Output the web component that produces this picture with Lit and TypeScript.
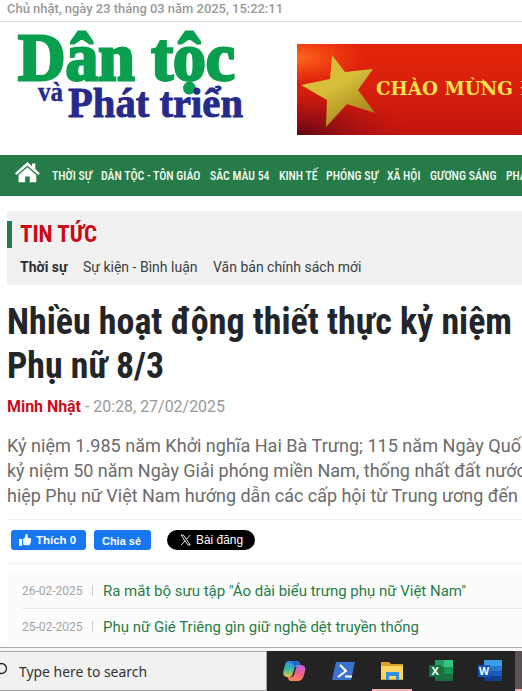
import { LitElement, html, svg, css } from "lit";
import { customElement, property } from "lit/decorators.js";

/** One line of text set to an exact measure. */
@customElement("fit-line")
class FitLine extends LitElement {
  @property() text = "";
  @property({ type: Number }) w = 0;
  @property({ type: Number }) h = 20;
  @property({ type: Number }) base = 15;
  static styles = css`
    :host { display: block; flex: none; }
    svg { display: block; overflow: visible; }
    text { fill: currentColor; stroke: currentColor; stroke-width: var(--stroke, 0); white-space: pre; }
  `;
  render() {
    return html`<svg width=${this.w} height=${this.h}>${svg`<text x="0" y=${this.base} textLength=${this.w} lengthAdjust="spacingAndGlyphs">${this.text}</text>`}</svg>`;
  }
}

@customElement("app-root")
class AppRoot extends LitElement {
  static styles = css`
    :host { display: flex; flex-direction: column; width: 522px; height: 691px; overflow: hidden; background: #fff; font-family: Roboto, "Liberation Sans", sans-serif; color: #222529; }
    * { box-sizing: border-box; }
    svg { display: block; flex: none; }
    .date { height: 22px; padding-left: 7px; border-bottom: 1px solid #ddd; color: #999; font-size: 13px; font-weight: 500; flex: none; }
    .head { display: flex; justify-content: space-between; height: 133px; flex: none; }
    .logo { padding: 10px 0 0 18px; font-family: "Liberation Serif", serif; font-weight: 700; }
    .logo1 { color: #08a04f; font-size: 67px; --stroke: 2.8px; }
    .logo2 { display: flex; gap: 5px; padding-left: 20px; color: #262a8c; }
    .va { font-size: 28px; --stroke: .4px; }
    .pt { font-size: 42px; --stroke: .9px; }
    .banner { margin-top: 22px; width: 225px; height: 91px; overflow: hidden; }
    .nav { display: flex; height: 41px; padding-left: 15px; background: #267c48; color: #f4faf5; font-size: 13px; font-weight: 500; flex: none; }
    .nav, .sec-title, .title { font-family: "Roboto Condensed", Roboto, sans-serif; font-stretch: 75%; }
    .home { margin: 7px 12px 0 0; }
    .nav fit-line { margin-right: 9.2px; }
    .section { margin: 15px 0 0 7px; height: 74px; background: #f1f1f1; padding-top: 10px; flex: none; }
    .sec-title { border-left: 5px solid #267c48; padding-left: 8px; height: 27px; color: #c80a16; font-size: 24px; font-weight: 700; }
    .tabs { display: flex; gap: 15.5px; padding: 9px 0 0 13px; font-size: 15px; color: #3b3e42; }
    .tabs .on { font-weight: 700; color: #2c2f33; }
    .title { padding: 15px 0 0 7px; font-size: 36px; font-weight: 700; flex: none; }
    .meta { display: flex; gap: 4px; padding: 4px 0 0 7px; color: #999; font-size: 16px; flex: none; }
    .author { color: #cb0d1b; font-weight: 700; }
    .lead { margin-top: 15px; padding-left: 7px; font-size: 18px; color: #6b6b6b; flex: none; }
    .share { display: flex; margin: 15px 0 0 8px; height: 45px; border: solid #ececec; border-width: 1px 0; padding: 10px 0 0 3px; flex: none; color: #fff; font-family: "Liberation Sans", sans-serif; font-size: 11px; font-weight: 700; }
    .btn { display: flex; height: 20px; border-radius: 3px; background: #1877f2; }
    .like { width: 75px; padding-left: 7px; gap: 4px; }
    .chia { width: 57px; margin-left: 8px; padding-left: 8px; }
    .post { width: 88px; margin-left: 16px; border-radius: 10px; background: #000; padding-left: 13px; gap: 4px; font-weight: 400; font-size: 12px; }
    .related { margin: 9px 0 0 7px; height: 74px; background: #fcfcfc; padding-left: 15px; flex: none; }
    .row { display: flex; height: 35px; color: #267c48; font-size: 15px; }
    .row + .row { border-top: 1px solid #ebebeb; }
    .day { color: #a3a3a3; font-size: 12px; }
    .bar { width: 1px; height: 11px; margin: 12px 10px 0 9px; background: #ccc; }
    .edge { height: 4px; background: #f8f8f8; border-top: 1px solid #aaa; flex: none; }
    .task { display: flex; height: 40px; background: #242323; flex: none; }
    .search { display: flex; width: 267px; background: #f1f1f1; border: solid #a5a5a5; border-width: 1px 1px 1px 0; color: #333; font-family: "Noto Sans", sans-serif; font-size: 15px; gap: 12px; }
    .apps { flex: 1; }
  `;

  private item(t: string, w: number) {
    return html`<fit-line .text=${t} .w=${w} .h=${41} .base=${25}></fit-line>`;
  }

  render() {
    const nav: [string, number][] = [["THỜI SỰ", 40], ["DÂN TỘC - TÔN GIÁO", 99.5], ["SẮC MÀU 54", 59.5], ["KINH TẾ", 38.5], ["PHÓNG SỰ", 52], ["XÃ HỘI", 33.5], ["GƯƠNG SÁNG", 66.5], ["PHÁP LUẬT", 54]];
    return html`
      <div class="date"><fit-line .text=${"Chủ nhật, ngày 23 tháng 03 năm 2025, 15:22:11"} .w=${276} .h=${21} .base=${13}></fit-line></div>
      <div class="head">
        <div class="logo">
          <fit-line class="logo1" .text=${"Dân tộc"} .w=${217} .h=${54} .base=${48}></fit-line>
          <div class="logo2">
            <fit-line class="va" .text=${"và"} .w=${25} .h=${40} .base=${15}></fit-line>
            <fit-line class="pt" .text=${"Phát triển"} .w=${175} .h=${40} .base=${31}></fit-line>
          </div>
        </div>
        <svg class="banner" width="225" height="91" viewBox="0 0 225 91">
          <defs>
            <linearGradient id="r" x1="0" y1="0" x2="0" y2="1"><stop offset="0" stop-color="#e3260a"/><stop offset=".5" stop-color="#d81f0c"/><stop offset="1" stop-color="#c4160f"/></linearGradient>
            <radialGradient id="o" cx="0" cy=".15" r=".3"><stop offset="0" stop-color="#ff6a1c"/><stop offset="1" stop-color="#ff4a10" stop-opacity="0"/></radialGradient>
            <radialGradient id="k" cx="0" cy="1" r=".5"><stop offset="0" stop-color="#5e0716"/><stop offset="1" stop-color="#a80b14" stop-opacity="0"/></radialGradient>
            <linearGradient id="s" x1="0" y1="0" x2=".6" y2="1"><stop offset="0" stop-color="#e0b42c"/><stop offset=".5" stop-color="#d5c13b"/><stop offset="1" stop-color="#a9851c"/></linearGradient>
          </defs>
          <rect width="225" height="91" fill="url(#r)"/><rect width="225" height="91" fill="url(#k)"/><rect width="225" height="91" fill="url(#o)"/>
          <path d="M35 11 48 28 76 25 61 46 78 69 50 60 29 83 30 56 4 41 33 35Z" fill="url(#s)"/>
          <text x="79" y="51" font-family="DejaVu Serif" font-weight="700" font-size="18" fill="#f7e34b" textLength="137" lengthAdjust="spacingAndGlyphs">CHÀO MỪNG</text>
          <text x="223" y="51" font-family="DejaVu Serif" font-weight="700" font-size="18" fill="#f7e34b">Đ</text>
        </svg>
      </div>
      <div class="nav">
        <svg class="home" width="25" height="21" viewBox="0 0 25 21" fill="#fff"><path d="M12.4 0 0 11.3l1.6 1.8L12.4 3.5l10.9 9.6 1.5-1.8-4.5-4.2V1.4h-3.2v2.8z"/><path d="M12.4 5.2 3.6 13v7.3h6.600v-5.800h4.500v5.800h6.600V13z"/></svg>
        ${nav.map(([t, w]) => this.item(t, w))}
      </div>
      <div class="section">
        <div class="sec-title"><fit-line .text=${"TIN TỨC"} .w=${77} .h=${27} .base=${21}></fit-line></div>
        <div class="tabs">
          <fit-line class="on" .text=${"Thời sự"} .w=${47.5} .h=${20} .base=${15}></fit-line>
          <fit-line .text=${"Sự kiện - Bình luận"} .w=${114.5} .h=${20} .base=${15}></fit-line>
          <fit-line .text=${"Văn bản chính sách mới"} .w=${148.5} .h=${20} .base=${15}></fit-line>
        </div>
      </div>
      <div class="title">
        <fit-line .text=${"Nhiều hoạt động thiết thực kỷ niệm"} .w=${505} .h=${43.5} .base=${34}></fit-line>
        <fit-line .text=${"Phụ nữ 8/3"} .w=${157} .h=${43.5} .base=${33.5}></fit-line>
      </div>
      <div class="meta">
        <fit-line class="author" .text=${"Minh Nhật"} .w=${74} .h=${23} .base=${21}></fit-line>
        <fit-line .text=${"- 20:28, 27/02/2025"} .w=${140} .h=${23} .base=${21}></fit-line>
      </div>
      <div class="lead">
        <fit-line .text=${"Kỷ niệm 1.985 năm Khởi nghĩa Hai Bà Trưng; 115 năm Ngày Quố"} .w=${514} .h=${25} .base=${23}></fit-line>
        <fit-line .text=${"kỷ niệm 50 năm Ngày Giải phóng miền Nam, thống nhất đất nước"} .w=${519} .h=${25} .base=${23}></fit-line>
        <fit-line .text=${"hiệp Phụ nữ Việt Nam hướng dẫn các cấp hội từ Trung ương đến"} .w=${511} .h=${25} .base=${23}></fit-line>
      </div>
      <div class="share">
        <div class="btn like">
          <svg width="14" height="20" viewBox="0 0 14 20" fill="#fff"><path d="M1 9h3v7H1zM5 9c2-1 2.600-2.500 2.600-5 2.300-.4 2.800 2 1.900 4H12c1.300 0 1.600 1.200.9 2 .6.700.3 1.500-.3 1.900.3.800 0 1.500-.6 1.800.1 1-.5 1.600-1.500 1.600H7.500c-1 0-1.500-.5-2.500-.7z"/></svg>
          <fit-line .text=${"Thích 0"} .w=${40} .h=${20} .base=${14}></fit-line>
        </div>
        <div class="btn chia"><fit-line .text=${"Chia sẻ"} .w=${39} .h=${20} .base=${15}></fit-line></div>
        <div class="btn post">
          <svg width="12" height="20" viewBox="0 0 12 20" fill="none" stroke="#fff"><path d="M1 5h2.300l7 10H8zM10.300 5 6.600 9.200M4.900 11 1.200 15" stroke-width=".9"/></svg>
          <fit-line .text=${"Bài đăng"} .w=${47} .h=${20} .base=${14}></fit-line>
        </div>
      </div>
      <div class="related">
        ${([["26-02-2025", "Ra mắt bộ sưu tập \"Áo dài biểu trưng phụ nữ Việt Nam\"", 363], ["25-02-2025", "Phụ nữ Gié Triêng gìn giữ nghề dệt truyền thống", 316]] as [string, string, number][]).map(([d, t, w]) => html`
          <div class="row"><fit-line class="day" .text=${d} .w=${60.5} .h=${34} .base=${22}></fit-line><span class="bar"></span><fit-line .text=${t} .w=${w} .h=${34} .base=${23}></fit-line></div>`)}
      </div>
      <div class="edge"></div>
      <div class="task">
        <div class="search">
          <svg width="7" height="38" viewBox="0 0 7 38" fill="none" stroke="#222" stroke-width="1.300"><circle cx="1.500" cy="16.500" r="5"/></svg>
          <fit-line .text=${"Type here to search"} .w=${128} .h=${38} .base=${25}></fit-line>
        </div>
        <svg class="apps" width="255" height="40" viewBox="267 651 255 40">
          <defs>
            <linearGradient id="c1" x1="0" y1="0" x2="0" y2="1"><stop offset="0" stop-color="#2b8be8"/><stop offset=".5" stop-color="#35b9a5"/><stop offset="1" stop-color="#e8c83a"/></linearGradient>
            <linearGradient id="c2" x1="0" y1="0" x2="0" y2="1"><stop offset="0" stop-color="#b06bf0"/><stop offset=".5" stop-color="#ee5c93"/><stop offset="1" stop-color="#f98a4a"/></linearGradient>
          </defs>
          <rect x="515" y="651" width="7" height="40" fill="#5b5152"/><rect x="515" y="689" width="7" height="2" fill="#efb3ac"/>
          <path d="M290 661h7c2 0 3 1 3 4l-2 2h-3l-2 6c-1 3-2 4-4 4h-2c-5-1-4-5-3-8 1-4 2-8 4-8z" fill="url(#c1)"/>
          <path d="M290 661h7c2 0 3 1 3 4h-4l-1.500 3c-1-3-1.500-6-4.500-7z" fill="#2467d0"/>
          <path d="M298 681h-7c-2 0-3-2-3.500-4h3.500c2 0 3-2 3.500-4l2-6c.5-1 1-2 3-2h2c5 1 4 5 3 8-1 4-2 8-6.500 8z" fill="url(#c2)"/>
          <path d="M336 662h19l-4 18h-19z" fill="#3b72cf"/>
          <path d="m340 665 6 6-8 6M345 676.500h7" fill="none" stroke="#fff" stroke-width="2"/>
          <path d="M381 662h8l2 2h12v16h-22z" fill="#dba32c"/><path d="M381 666h22v13h-22z" fill="#fbd462"/>
          <path d="M386 680v-8h13v8h-3v-4h-7v4z" fill="#3190df"/>
          <rect x="372" y="689" width="40" height="2" fill="#efb3ac"/>
          <path d="M435 660h18v21h-18z" fill="#1d6d42"/><path d="M444 660h9v7h-9z" fill="#35c481"/><path d="M435 660h9v7h-9z" fill="#219c62"/><path d="M444 667h9v7h-9z" fill="#159653"/><rect x="429" y="665" width="12" height="12" fill="#107440"/>
          <text x="431.500" y="675" fill="#fff" font-family="Open Sans" font-weight="700" font-size="11">X</text>
          <path d="M484 660h18v6h-18z" fill="#3c9de7"/><path d="M484 666h18v5h-18z" fill="#2b77cf"/><path d="M484 671h18v5h-18z" fill="#195abd"/><path d="M484 676h18v5h-18z" fill="#123f91"/><rect x="478" y="665" width="12" height="12" fill="#1854b4"/>
          <text x="479" y="675" fill="#fff" font-family="Open Sans" font-weight="700" font-size="10.500">W</text>
        </svg>
      </div>`;
  }
}
